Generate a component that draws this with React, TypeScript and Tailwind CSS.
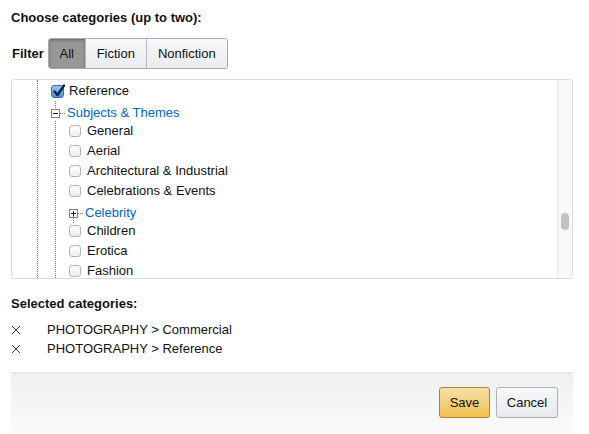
import React from 'react';

const Check: React.FC<{ checked?: boolean }> = ({ checked }) =>
  checked ? (
    <span className="relative -mr-[1px] flex h-[13px] w-[13px] shrink-0 items-center justify-center rounded-[3px] border border-[#3d6fb5] bg-gradient-to-b from-[#9cc3f2] to-[#4d8ee0]">
      <svg viewBox="0 0 14 14" className="absolute -top-[2px] left-[0px] h-[14px] w-[14px]">
        <path d="M2.5 7.5 L5.5 11 L12 1.5" fill="none" stroke="#14233d" strokeWidth="2.4" strokeLinecap="round" strokeLinejoin="round" />
      </svg>
    </span>
  ) : (
    <span className="h-[12px] w-[12px] shrink-0 rounded-[3px] border border-[#b5b5b5] bg-gradient-to-b from-white to-[#ececec]" />
  );

const Toggle: React.FC<{ open?: boolean }> = ({ open }) => (
  <span className="flex h-[9px] w-[9px] shrink-0 items-center justify-center border border-[#808080] bg-white">
    <svg viewBox="0 0 7 7" className="h-[7px] w-[7px]">
      <path d="M1 3.5 H6" stroke="#222" strokeWidth="1" />
      {!open && <path d="M3.5 1 V6" stroke="#222" strokeWidth="1" />}
    </svg>
  </span>
);

const Leaf: React.FC<{ label: string; checked?: boolean }> = ({ label, checked }) => (
  <div className="flex h-5 items-center gap-[6px]">
    <Check checked={checked} />
    <span>{label}</span>
  </div>
);

const Branch: React.FC<{ label: string; open?: boolean; first?: boolean }> = ({ label, open, first }) => (
  <div className="relative flex h-5 items-center pt-1">
    {first && <span className="absolute left-[4px] top-0 h-[7px] border-l border-dotted border-[#777]" />}
    {!open && <span className="absolute left-[4px] top-[15px] h-[7px] border-l border-dotted border-[#777]" />}
    <Toggle open={open} />
    <span className="w-[5px] border-t border-dotted border-[#777]" />
    <span className="ml-[2px] text-[#0066c0]">{label}</span>
  </div>
);

const Btn: React.FC<{ children: React.ReactNode; className?: string }> = ({ children, className }) => (
  <button className={`h-[31px] rounded-[3px] border text-[13px] ${className ?? ''}`}>{children}</button>
);

export default function App() {
  const subjects = ['General', 'Aerial', 'Architectural & Industrial', 'Celebrations & Events'];

  return (
    <div className="h-[434px] w-[589px] bg-white pl-[11px] pr-[16px] pt-[10px] text-[13px] leading-4 text-[#111] [font-family:'Liberation_Sans',Arial,sans-serif]">
      <div className="font-bold">Choose categories (up to two):</div>

      {/* filter */}
      <div className="mt-3 flex items-center gap-[4px]">
        <span className="pl-[1px] font-bold">Filter</span>
        <div className="flex h-[31px] overflow-hidden rounded-[3px] border border-[#a6a9ae]">
          <span className="flex w-[36px] items-center justify-center bg-[#979797] shadow-[inset_0_1px_3px_rgba(0,0,0,0.35)]">All</span>
          <span className="flex w-[61px] items-center justify-center border-l border-[#b7bac0] bg-gradient-to-b from-[#f7f8fa] to-[#e9ebee]">Fiction</span>
          <span className="flex w-[81px] items-center justify-center border-l border-[#b7bac0] bg-gradient-to-b from-[#f7f8fa] to-[#e9ebee]">Nonfiction</span>
        </div>
      </div>

      {/* tree */}
      <div className="mt-[10px] flex h-[200px] overflow-hidden rounded-[3px] border border-[#dcdcdc]">
        <div className="flex-1 overflow-hidden pl-[25px]">
          <div className="h-full border-l border-dotted border-[#777] pl-[13px] pt-[1px]">
            <Leaf label="Reference" checked />
            <Branch label="Subjects & Themes" open first />
            <div className="ml-[4px] h-full border-l border-dotted border-[#777] pl-[13px]">
              {subjects.map((s) => (
                <Leaf key={s} label={s} />
              ))}
              <Branch label="Celebrity" />
              <Leaf label="Children" />
              <Leaf label="Erotica" />
              <Leaf label="Fashion" />
            </div>
          </div>
        </div>
        <div className="w-[15px] shrink-0 border-l border-[#e9e9e9] bg-[#f8f8f8] pl-[3px] pt-[133px]">
          <div className="h-[17px] w-[8px] rounded-full bg-[#c2c2c2]" />
        </div>
      </div>

      {/* selected */}
      <div className="mt-[17px] font-bold">Selected categories:</div>
      <div className="mt-2 leading-[19px]">
        {['Commercial', 'Reference'].map((c) => (
          <div key={c} className="flex items-center">
            <svg viewBox="0 0 10 10" className="h-[10px] w-[10px]">
              <path d="M1 1 L9 9 M9 1 L1 9" stroke="#333" strokeWidth="1" />
            </svg>
            <span className="ml-[26px]">PHOTOGRAPHY &gt; {c}</span>
          </div>
        ))}
      </div>

      {/* footer */}
      <div className="mt-[14px] flex h-[62px] items-start justify-end gap-[6px] border-t border-[#e3e3e3] bg-gradient-to-b from-[#efefef] to-[#fbfbfb] pr-[15px] pt-[14px]">
        <Btn className="w-[51px] border-[#a88734] bg-gradient-to-b from-[#f7dfa5] to-[#f0c14b]">Save</Btn>
        <Btn className="w-[62px] border-[#adb1b8] bg-gradient-to-b from-[#f7f8fa] to-[#e7e9ec]">Cancel</Btn>
      </div>
    </div>
  );
}
